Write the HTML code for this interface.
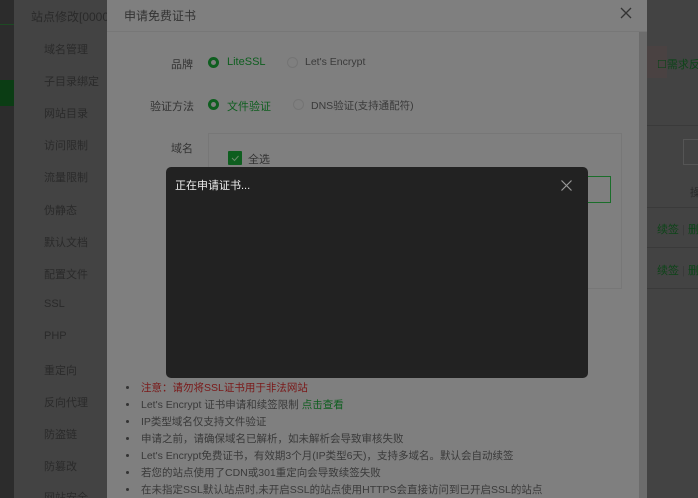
<!DOCTYPE html>
<html><head><meta charset="utf-8"><style>
*{margin:0;padding:0;box-sizing:border-box}
html,body{width:698px;height:498px;overflow:hidden}
body{position:relative;background:#444;font-family:"Liberation Sans","Noto Sans CJK SC",sans-serif;font-size:11px}
.a{position:absolute;white-space:nowrap}
.side{color:#2a2a2a;font-size:11px}
.rad{position:absolute;width:11px;height:11px;border-radius:50%}
.on{background:#0e5e1f}
.on::after{content:"";position:absolute;left:3px;top:3px;width:5px;height:5px;border-radius:50%;background:#7f7f7f}
.off{border:1px solid #747474}
.li{position:absolute;left:127px;color:#3a3a3a;font-size:10.5px}
.li::before{content:"";position:absolute;left:-1px;top:6px;width:3px;height:3px;border-radius:50%;background:#333}
.li span{margin-left:14px}
</style></head><body>
<div class="a" style="left:0;top:0;width:14px;height:498px;background:#2c2c2c"></div>
<div class="a" style="left:0;top:24px;width:14px;height:1px;background:#1e4a24"></div>
<div class="a" style="left:0;top:80px;width:14px;height:26px;background:#0b3d14"></div>
<div class="a" style="left:14px;top:0;width:93px;height:498px;background:#434343"></div>
<div class="a" style="left:31px;top:8px;color:#2a2a2a;font-size:12px">站点修改[0000</div>
<div class="a side" style="left:44px;top:41px">域名管理</div>
<div class="a side" style="left:44px;top:73px">子目录绑定</div>
<div class="a side" style="left:44px;top:105px">网站目录</div>
<div class="a side" style="left:44px;top:137px">访问限制</div>
<div class="a side" style="left:44px;top:169px">流量限制</div>
<div class="a side" style="left:44px;top:202px">伪静态</div>
<div class="a side" style="left:44px;top:234px">默认文档</div>
<div class="a side" style="left:44px;top:266px">配置文件</div>
<div class="a side" style="left:44px;top:298px">SSL</div>
<div class="a side" style="left:44px;top:330px">PHP</div>
<div class="a side" style="left:44px;top:362px">重定向</div>
<div class="a side" style="left:44px;top:394px">反向代理</div>
<div class="a side" style="left:44px;top:426px">防盗链</div>
<div class="a side" style="left:44px;top:458px">防篡改</div>
<div class="a side" style="left:44px;top:489px">网站安全</div>

<div class="a" style="left:107px;top:0;width:540px;height:498px;background:#7f7f7f"></div>
<div class="a" style="left:107px;top:31px;width:540px;height:1px;background:#777"></div>
<div class="a" style="left:124px;top:7px;color:#333;font-size:12px">申请免费证书</div>
<svg class="a" style="left:620px;top:7px" width="12" height="12"><path d="M1 1L11 11M11 1L1 11" stroke="#333" stroke-width="1.3"/></svg>
<div class="a" style="left:639px;top:32px;width:8px;height:466px;background:#6c6c6c"></div>

<div class="a" style="left:171px;top:56px;color:#333">品牌</div>
<div class="rad on" style="left:208px;top:57px"></div>
<div class="a" style="left:227px;top:56px;color:#0e5e1f">LiteSSL</div>
<div class="rad off" style="left:287px;top:57px"></div>
<div class="a" style="left:305px;top:56px;color:#3a3a3a;font-size:10.5px">Let's Encrypt</div>
<div class="a" style="left:150px;top:98px;color:#333">验证方法</div>
<div class="rad on" style="left:208px;top:99px"></div>
<div class="a" style="left:227px;top:98px;color:#0e5e1f">文件验证</div>
<div class="rad off" style="left:293px;top:99px"></div>
<div class="a" style="left:311px;top:98px;color:#3a3a3a;font-size:10.5px">DNS验证(支持通配符)</div>
<div class="a" style="left:171px;top:140px;color:#333">域名</div>
<div class="a" style="left:208px;top:133px;width:414px;height:156px;border:1px solid #777"></div>
<div class="a" style="left:228px;top:151px;width:14px;height:14px;background:#0e5e1f;border-radius:1px"></div>
<svg class="a" style="left:228px;top:151px" width="14" height="14"><path d="M4 7L6.5 9.5L10.5 5" stroke="#6a8a6a" stroke-width="1" fill="none"/></svg>
<div class="a" style="left:248px;top:151px;color:#333">全选</div>
<div class="a" style="left:560px;top:176px;width:51px;height:27px;border:1px solid #1a6e2a"></div>

<div class="li" style="top:380px;color:#7a1818"><span>注意：请勿将SSL证书用于非法网站</span></div>
<div class="li" style="top:397px"><span>Let's Encrypt 证书申请和续签限制 <b style="color:#0e5e1f;font-weight:normal">点击查看</b></span></div>
<div class="li" style="top:414px"><span>IP类型域名仅支持文件验证</span></div>
<div class="li" style="top:431px"><span>申请之前，请确保域名已解析，如未解析会导致审核失败</span></div>
<div class="li" style="top:448px"><span>Let's Encrypt免费证书，有效期3个月(IP类型6天)，支持多域名。默认会自动续签</span></div>
<div class="li" style="top:465px"><span>若您的站点使用了CDN或301重定向会导致续签失败</span></div>
<div class="li" style="top:482px"><span>在未指定SSL默认站点时,未开启SSL的站点使用HTTPS会直接访问到已开启SSL的站点</span></div>

<div class="a" style="left:647px;top:0;width:51px;height:498px;background:#434343"></div>
<div class="a" style="left:647px;top:46px;width:20px;height:32px;background:#4a4242"></div>
<div class="a" style="left:657px;top:56px;color:#0d4418;font-size:11px">☐需求反馈</div>
<div class="a" style="left:647px;top:125px;width:51px;height:1px;background:#3a3a3a"></div>
<div class="a" style="left:683px;top:139px;width:20px;height:26px;border:1px solid #555"></div>
<div class="a" style="left:690px;top:184px;color:#2a2a2a">操</div>
<div class="a" style="left:647px;top:207px;width:51px;height:1px;background:#3a3a3a"></div>
<div class="a" style="left:657px;top:221px;color:#0d4418">续签 <span style="color:#3a3a3a">|</span> 删</div>
<div class="a" style="left:647px;top:247px;width:51px;height:1px;background:#3a3a3a"></div>
<div class="a" style="left:657px;top:262px;color:#0d4418">续签 <span style="color:#3a3a3a">|</span> 删</div>
<div class="a" style="left:647px;top:288px;width:51px;height:1px;background:#3a3a3a"></div>

<div class="a" style="left:166px;top:167px;width:422px;height:211px;background:#222;border-radius:5px"></div>
<div class="a" style="left:175px;top:177px;color:#eee;font-size:11px">正在申请证书...</div>
<svg class="a" style="left:561px;top:180px" width="11" height="11"><path d="M0.5 0.5L10.5 10.5M10.5 0.5L0.5 10.5" stroke="#999" stroke-width="1.2"/></svg>
</body></html>
